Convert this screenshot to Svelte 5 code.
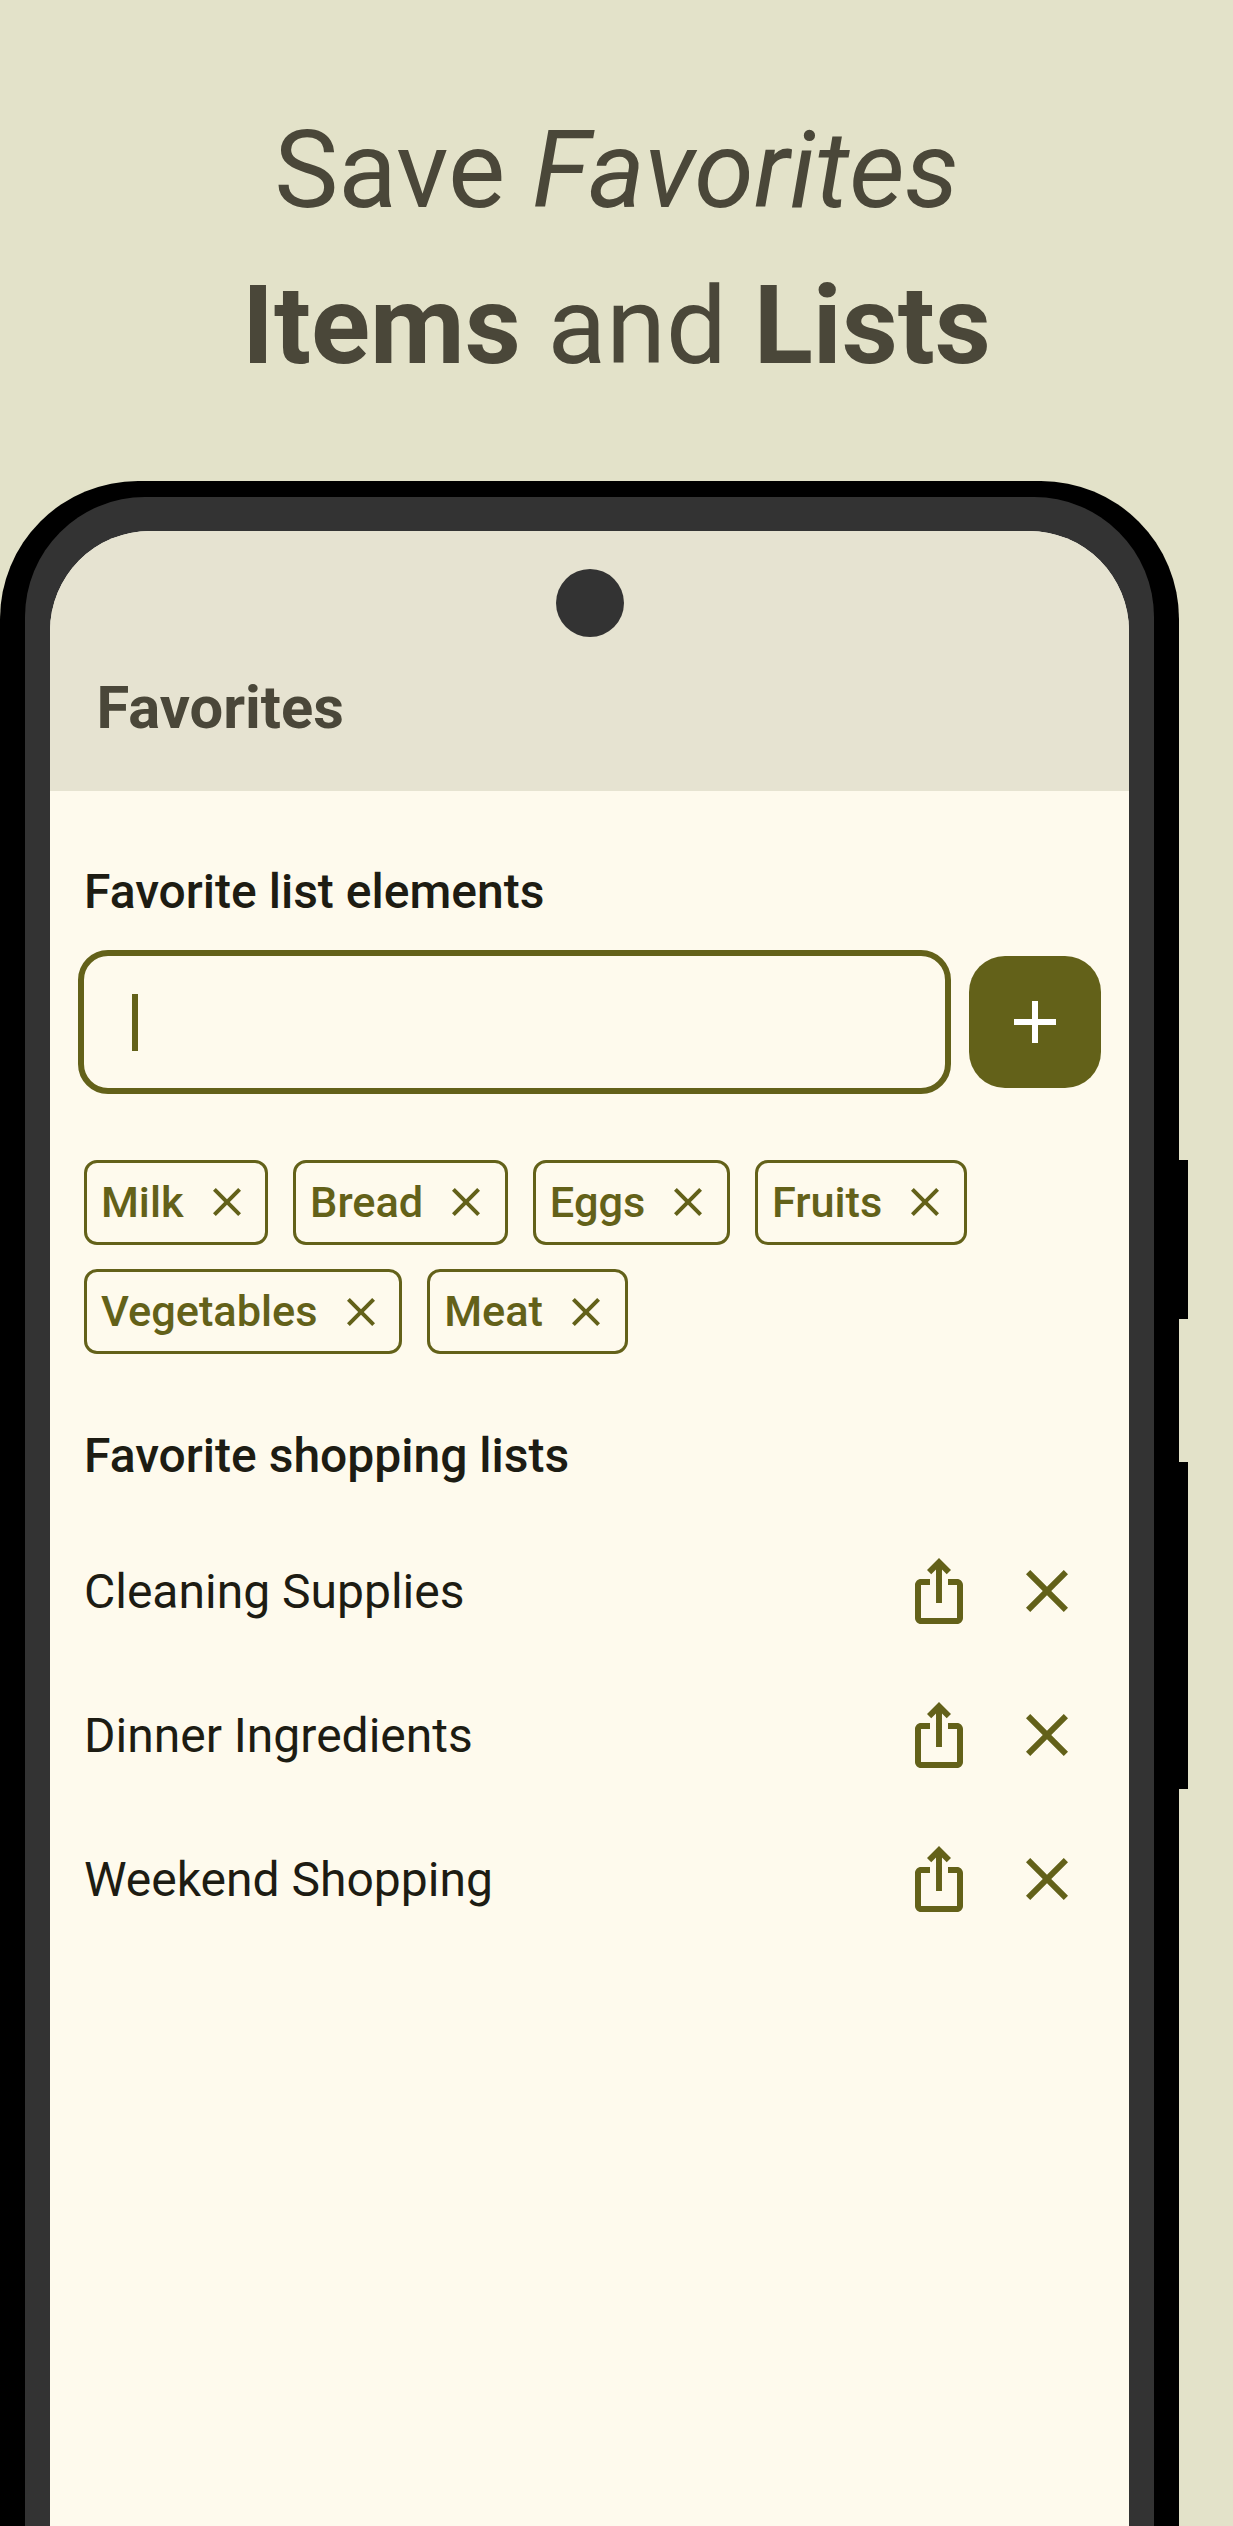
<script>
  const chips = ['Milk', 'Bread', 'Eggs', 'Fruits', 'Vegetables', 'Meat'];
  const lists = ['Cleaning Supplies', 'Dinner Ingredients', 'Weekend Shopping'];
  const close = 'M19 6.41 17.59 5 12 10.59 6.41 5 5 6.41 10.59 12 5 17.59 6.41 19 12 13.41 17.59 19 19 17.59 13.41 12z';
  const share = 'M16 5l-1.42 1.42-1.59-1.59V16h-1.98V4.83L9.42 6.42 8 5l4-4 4 4zm4 5v11c0 1.1-.9 2-2 2H6c-1.11 0-2-.9-2-2V10c0-1.11.89-2 2-2h3v2H6v11h12V10h-3V8h3c1.1 0 2 .89 2 2z';
  const plus = 'M19 13h-6v6h-2v-6H5v-2h6V5h2v6h6v2z';
</script>

<div class="page">
  <header class="hero">
    <h1>Save <em>Favorites</em><br /><strong>Items</strong> and <strong>Lists</strong></h1>
  </header>

  <div class="phone">
    <span class="side volume"></span>
    <span class="side power"></span>
    <div class="bezel">
      <div class="screen">
        <div class="appbar">
          <span class="camera"></span>
          <h2>Favorites</h2>
        </div>
        <main class="content">
          <h3>Favorite list elements</h3>
          <div class="entry">
            <div class="field" role="textbox" aria-label="Favorite list elements"><span class="caret"></span></div>
            <button class="add" aria-label="Add">
              <svg viewBox="0 0 24 24" width="72" height="72"><path d={plus} /></svg>
            </button>
          </div>

          <div class="chips">
            {#each chips as chip}
              <div class="chip">
                <span>{chip}</span>
                <svg viewBox="0 0 24 24" width="48" height="48"><path d={close} /></svg>
              </div>
            {/each}
          </div>

          <h3 class="second">Favorite shopping lists</h3>
          <ul class="lists">
            {#each lists as list}
              <li>
                <span class="name">{list}</span>
                <svg viewBox="0 0 24 24" width="72" height="72"><path d={share} /></svg>
                <svg viewBox="0 0 24 24" width="72" height="72"><path d={close} /></svg>
              </li>
            {/each}
          </ul>
        </main>
      </div>
    </div>
  </div>
</div>

<style>
  :global(body) {
    margin: 0;
    background: #e3e2c9;
  }
  .page {
    width: 1233px;
    height: 2526px;
    overflow: hidden;
    background: #e3e2c9;
    font-family: Roboto, sans-serif;
  }
  .hero {
    height: 481px;
    box-sizing: border-box;
    padding-top: 92px;
  }
  h1 {
    margin: 0;
    text-align: center;
    font-size: 108px;
    line-height: 156px;
    font-weight: 400;
    color: #4a4739;
  }
  h1 strong {
    font-size: 109.3px;
    font-weight: 700;
  }
  .phone {
    position: relative;
    width: 1179.4px;
    height: 2200px;
    box-sizing: border-box;
    padding: 16px 25px 0 25.4px;
    background: #000;
    border-radius: 138px 138px 0 0;
  }
  .side {
    position: absolute;
    left: 100%;
    width: 8.6px;
    background: #000;
  }
  .volume {
    top: 679px;
    height: 159px;
  }
  .power {
    top: 981px;
    height: 327px;
  }
  .bezel {
    height: 100%;
    box-sizing: border-box;
    padding: 34px 25.4px 0 25px;
    background: #333;
    border-radius: 120px 120px 0 0;
  }
  .screen {
    height: 100%;
    background: #fefaed;
    border-radius: 100px 100px 0 0;
    overflow: hidden;
  }
  .appbar {
    position: relative;
    height: 260px;
    background: #e6e3d1;
  }
  .camera {
    position: absolute;
    left: 505.6px;
    top: 38px;
    width: 68px;
    height: 68px;
    border-radius: 50%;
    background: #333;
  }
  h2 {
    margin: 0;
    padding: 141px 0 0 46px;
    font-size: 59.7px;
    line-height: 72px;
    font-weight: 700;
    color: #4a4739;
  }
  .content {
    padding: 76px 46.5px 0 33.6px;
    color: #1d1c13;
  }
  h3 {
    margin: 0;
    font-size: 48px;
    line-height: 50px;
    font-weight: 500;
  }
  .entry {
    display: flex;
    align-items: center;
    gap: 18.3px;
    margin: 33px 0 0 -5.6px;
  }
  .field {
    box-sizing: border-box;
    flex: none;
    width: 872.3px;
    height: 144px;
    padding-left: 48px;
    display: flex;
    align-items: center;
    border: 6px solid #636119;
    border-radius: 30px;
  }
  .caret {
    width: 6px;
    height: 57px;
    background: #636119;
  }
  .add {
    flex: none;
    width: 132px;
    height: 132px;
    padding: 0;
    border: 0;
    border-radius: 36px;
    background: #636119;
    display: flex;
    align-items: center;
    justify-content: center;
  }
  .add path {
    fill: #fff;
  }
  .chips {
    display: flex;
    flex-wrap: wrap;
    gap: 24.8px;
    margin-top: 66px;
  }
  .chip {
    box-sizing: border-box;
    height: 84.5px;
    display: flex;
    align-items: center;
    gap: 19px;
    padding: 0 14.8px 0 14px;
    border: 3px solid #636119;
    border-radius: 13px;
    font-size: 43.3px;
    font-weight: 500;
    color: #636119;
  }
  path {
    fill: #636119;
  }
  .second {
    margin-top: 77px;
  }
  .lists {
    list-style: none;
    margin: 38px 0 0;
    padding: 0;
  }
  .lists li {
    height: 144px;
    display: flex;
    align-items: center;
    gap: 36px;
  }
  .name {
    flex: 1;
    padding-top: 2px;
    font-size: 48px;
    line-height: 56px;
    font-weight: 400;
  }
</style>
